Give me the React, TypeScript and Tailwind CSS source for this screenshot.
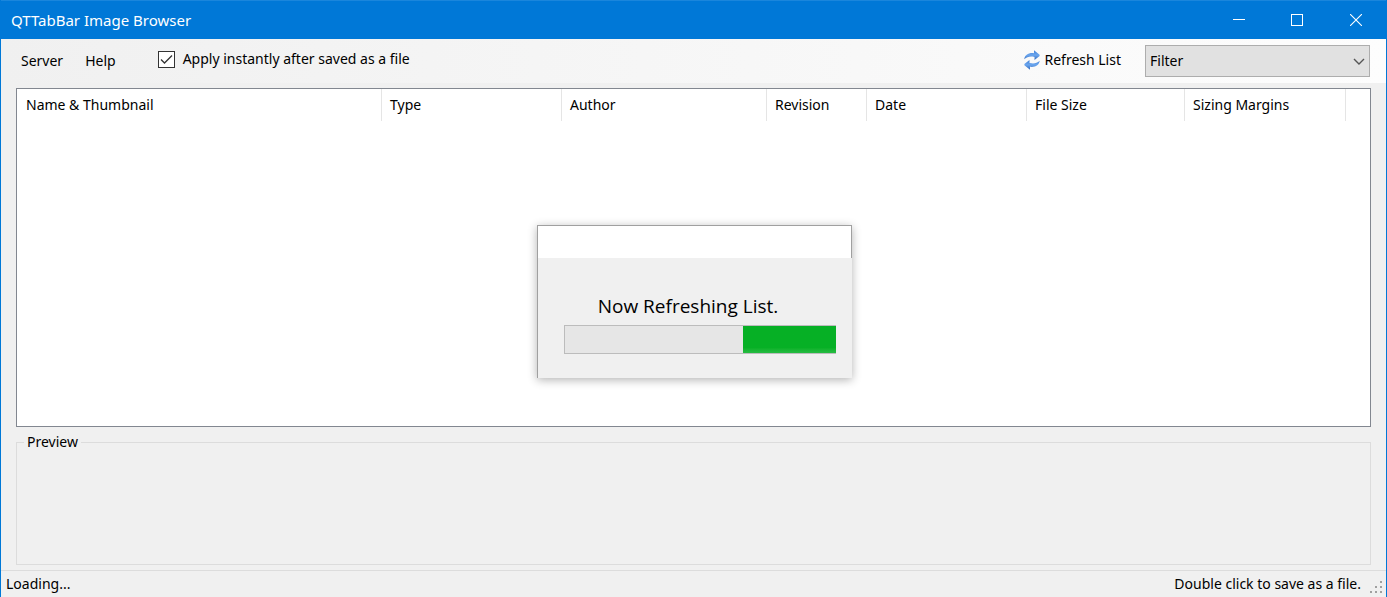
import { useState } from 'react';

const columns: { label: string; width: string }[] = [
  { label: 'Name & Thumbnail', width: 'w-[365px]' },
  { label: 'Type', width: 'w-[180px]' },
  { label: 'Author', width: 'w-[205px]' },
  { label: 'Revision', width: 'w-[100px]' },
  { label: 'Date', width: 'w-[160px]' },
  { label: 'File Size', width: 'w-[158px]' },
  { label: 'Sizing Margins', width: 'w-[161px]' },
];

const TitleBar: React.FC = () => (
  <header className="flex h-[39px] shrink-0 items-center justify-between border-t border-[#1a86dc] bg-[#0078d7] pl-[10px] text-white">
    <h1 className="text-[15px]">QTTabBar Image Browser</h1>
    <div className="flex h-full">
      <button aria-label="Minimize" className="flex w-[58px] items-center justify-center">
        <svg width="12" height="12" viewBox="0 0 12 12" shapeRendering="crispEdges">
          <path d="M0 5.5h12" stroke="currentColor" />
        </svg>
      </button>
      <button aria-label="Maximize" className="flex w-[58px] items-center justify-center">
        <svg width="12" height="12" viewBox="0 0 12 12" shapeRendering="crispEdges">
          <rect x="0.5" y="0.5" width="11" height="11" fill="none" stroke="currentColor" />
        </svg>
      </button>
      <button aria-label="Close" className="flex w-[60px] items-center justify-center">
        <svg width="12" height="12" viewBox="0 0 12 12">
          <path d="M0 0l12 12M12 0L0 12" stroke="currentColor" strokeWidth="1.1" />
        </svg>
      </button>
    </div>
  </header>
);

const RefreshIcon: React.FC = () => (
  <svg width="16" height="20" viewBox="0 0 16 20" aria-hidden="true">
    <defs>
      <linearGradient id="refresh" x1="0" y1="0" x2="0" y2="1">
        <stop offset="0" stopColor="#3f7fd6" />
        <stop offset="0.5" stopColor="#6ba6ee" />
        <stop offset="1" stopColor="#2f68bd" />
      </linearGradient>
    </defs>
    <path d="M0.3 9.3C0.8 5 4.5 2.600 10 3.200V0.300L15.600 4.800V6L10.500 10V7C6.500 6 3.300 6.500 0.300 9.300Z" fill="url(#refresh)" />
    <path d="M15.700 10.700C15.200 15 11.500 17.400 6 16.800V19.700L0.400 15.200V14L5.500 10V13C9.500 14 12.700 13.500 15.700 10.700Z" fill="url(#refresh)" />
  </svg>
);

const Toolbar: React.FC = () => {
  const [instant, setInstant] = useState(true);

  return (
    <div className="flex h-[44px] shrink-0 items-center bg-linear-to-r from-[#f0f0f0] to-[#fdfdfd] pr-4 pl-5">
      <nav className="flex gap-[22px]">
        <button>Server</button>
        <button>Help</button>
      </nav>
      <label className="ml-[42px] flex items-center gap-2 pb-1">
        <span className="relative flex">
          <input
            type="checkbox"
            checked={instant}
            onChange={(e) => setInstant(e.target.checked)}
            className="peer h-[17px] w-[17px] appearance-none border border-[#333] bg-white"
          />
          <svg
            className="pointer-events-none absolute inset-0 hidden peer-checked:block"
            width="17"
            height="17"
            viewBox="0 0 17 17"
          >
            <path d="M3 8.500L6.500 12 14 4.500" fill="none" stroke="#333" strokeWidth="1.300" />
          </svg>
        </span>
        Apply instantly after saved as a file
      </label>
      <button className="ml-auto flex items-center gap-1 pb-[2px]">
        <RefreshIcon />
        Refresh List
      </button>
      <div className="relative ml-6 w-[225px]">
        <select
          aria-label="Filter"
          className="block h-8 w-full appearance-none border border-[#adadad] bg-[#e1e1e1] px-1"
        >
          <option>Filter</option>
        </select>
        <svg
          className="pointer-events-none absolute top-[13px] right-[5px]"
          width="12"
          height="8"
          viewBox="0 0 12 8"
        >
          <path d="M1 1l5 5 5-5" fill="none" stroke="#555" strokeWidth="1.400" />
        </svg>
      </div>
    </div>
  );
};

const ImageList: React.FC = () => (
  <div className="min-h-0 flex-1 border border-[#828790] bg-white">
    <table className="w-full table-fixed border-separate border-spacing-0">
      <thead>
        <tr className="h-8">
          {columns.map((col) => (
            <th
              key={col.label}
              className={`${col.width} border-r border-[#e5e5e5] pl-2 text-left font-normal whitespace-nowrap first:pl-[9px]`}
            >
              {col.label}
            </th>
          ))}
          <td />
        </tr>
      </thead>
      <tbody />
    </table>
  </div>
);

const RefreshDialog: React.FC = () => (
  <div className="pointer-events-none absolute inset-0 flex items-center justify-center pt-[6px] pl-[2px]">
    <div
      role="dialog"
      aria-labelledby="refresh-text"
      className="w-[315px] border border-r-0 border-b-0 border-[#a0a0a0] bg-[#f0f0f0] shadow-[0_2px_9px_rgba(0,0,0,0.3)]"
    >
      <div className="h-8 border-r border-[#a0a0a0] bg-white" />
      <div className="pt-[34px] pr-4 pb-6 pl-[26px]">
        <p id="refresh-text" className="pr-6 text-center font-['Open_Sans',sans-serif] text-[19px] leading-7">
          Now Refreshing List.
        </p>
        <div
          role="progressbar"
          aria-labelledby="refresh-text"
          className="mt-[5px] flex h-[29px] justify-end border border-r-0 border-[#bcbcbc] bg-[#e6e6e6]"
        >
          <div className="w-[93px] bg-linear-to-b from-[#06b025] from-80% to-[#26bc42]" />
        </div>
      </div>
    </div>
  </div>
);

const StatusBar: React.FC = () => (
  <footer className="flex h-[27px] shrink-0 items-center border-t border-[#dcdcdc] pr-[2px] pl-[5px]">
    <span>Loading...</span>
    <span className="ml-auto">Double click to save as a file.</span>
    <svg className="ml-2 self-end" width="15" height="16" viewBox="0 0 15 16" fill="#a0a0a0" shapeRendering="crispEdges">
      <path d="M11 0h2v2h-2zM11 5h2v2h-2zM6 5h2v2H6zM11 10h2v2h-2zM6 10h2v2H6zM1 10h2v2H1z" />
    </svg>
  </footer>
);

const App: React.FC = () => {
  return (
    <div className="relative flex h-screen flex-col border-x border-[#0078d7] bg-[#f0f0f0] font-['Noto_Sans',sans-serif] text-[14px] leading-5 text-black">
      <TitleBar />
      <Toolbar />
      <main className="flex min-h-0 flex-1 flex-col px-[15px] pt-[5px] pb-[5px]">
        <ImageList />
        <fieldset className="mt-[5px] h-[133px] shrink-0 border border-[#dcdcdc] px-[7px]">
          <legend className="px-[3px]">Preview</legend>
        </fieldset>
      </main>
      <StatusBar />
      <RefreshDialog />
    </div>
  );
};

export default App;
